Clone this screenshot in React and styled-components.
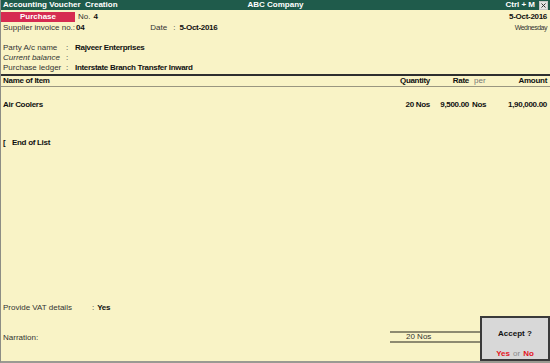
import styled, { createGlobalStyle } from 'styled-components';

const GlobalStyle = createGlobalStyle`
  html, body {
    margin: 0;
    padding: 0;
  }
  body {
    background: #f9f3c6;
    font-family: "Liberation Sans", Arial, sans-serif;
  }
`;

const Page = styled.div`
  position: relative;
  width: 550px;
  height: 363px;
  box-sizing: border-box;
  display: flex;
  flex-direction: column;
  background: #f9f3c6;
  border-left: 1px solid #8d8d85;
  border-bottom: 2px solid #9a9a92;
  overflow: hidden;
  font-size: 8px;
  color: #2a2a2a;
`;

const TitleBar = styled.div`
  height: 10px;
  display: grid;
  grid-template-columns: 1fr auto 1fr;
  align-items: center;
  padding: 0 2px 0 2px;
  background: #1f5b4b;
  color: #fff;
  font-weight: bold;
  line-height: 10px;
`;

const TitleRight = styled.div`
  display: flex;
  justify-content: flex-end;
  align-items: center;
  gap: 4px;
`;

const CloseBox = styled.span`
  width: 7px;
  height: 7px;
  display: flex;
  align-items: center;
  justify-content: center;
  background: #e4e4e4;
  border: 1px solid #c8c8c8;
`;

const Top = styled.div`
  display: flex;
  padding-right: 3px;
`;

const LeftCol = styled.div`
  flex: 1;
  display: flex;
  flex-direction: column;
`;

const RightCol = styled.div`
  display: flex;
  flex-direction: column;
  align-items: flex-end;
`;

const Row = styled.div`
  display: flex;
  align-items: center;
  height: 10px;
  line-height: 10px;
  margin-top: ${p => p.$mt || 0}px;
  padding-left: ${p => (p.$flush ? 0 : 2)}px;
  white-space: nowrap;
`;

const Badge = styled.div`
  width: 74px;
  height: 10px;
  background: #d62b51;
  color: #fff;
  font-weight: bold;
  text-align: center;
  line-height: 10px;
`;

const Label = styled.span`
  width: ${p => p.$w || 'auto'};
  margin-left: ${p => p.$ml || 0}px;
  font-style: ${p => (p.$italic ? 'italic' : 'normal')};
  color: #333;
`;

const Colon = styled.span`
  width: 9px;
  color: #333;
`;

const Value = styled.span`
  font-weight: bold;
  color: #111;
  letter-spacing: -0.3px;
  margin-left: ${p => p.$ml || 0}px;
`;

const DateBig = styled.span`
  font-weight: bold;
  color: #111;
  letter-spacing: -0.3px;
`;

const DaySmall = styled.span`
  font-size: 7px;
  letter-spacing: -0.5px;
  color: #333;
`;

const Divider = styled.div`
  height: ${p => p.$h}px;
  margin-top: ${p => p.$mt || 0}px;
  background: ${p => p.$c};
`;

const Grid = styled.div`
  display: grid;
  grid-template-columns: 1fr 60px 39px 35px 43px;
  align-items: center;
  height: 10px;
  line-height: 10px;
  padding: 0 3px 0 2px;
  margin-top: ${p => p.$mt || 0}px;
  font-weight: bold;
  color: #111;
  letter-spacing: -0.3px;
  white-space: nowrap;
`;

const Cell = styled.span`
  text-align: ${p => (p.$left ? 'left' : 'right')};
  padding-left: ${p => p.$pl || 0}px;
`;

const Per = styled(Cell)`
  font-weight: normal;
  color: #777;
  letter-spacing: 0;
`;

const Bracket = styled.span`
  width: 9px;
`;

const Bottom = styled.div`
  margin-top: auto;
  display: flex;
  flex-direction: column;
  padding-bottom: 18px;
`;

const NarrationRow = styled.div`
  display: flex;
  align-items: center;
  height: 12px;
  margin-top: 18px;
  padding-left: 2px;
`;

const TotalBox = styled.div`
  margin-left: auto;
  margin-right: 70px;
  width: 90px;
  height: 12px;
  box-sizing: border-box;
  border-top: 2px solid #8e8a70;
  border-bottom: 2px solid #8e8a70;
  padding-left: 16px;
  line-height: 8px;
  color: #333;
`;

const AcceptBox = styled.div`
  position: absolute;
  right: 0;
  bottom: 0;
  width: 70px;
  height: 45px;
  box-sizing: border-box;
  display: flex;
  flex-direction: column;
  align-items: center;
  border: 2px solid #3a3a3a;
  background: #d8d8d8;
  line-height: 10px;
`;

const AcceptTitle = styled.div`
  margin-top: 11px;
  font-weight: bold;
  color: #111;
`;

const AcceptChoice = styled.div`
  margin-top: auto;
  display: flex;
  gap: 3px;
`;

const Choice = styled.span`
  color: ${p => (p.$muted ? '#8a8a8a' : '#e3141c')};
  font-weight: ${p => (p.$muted ? 'normal' : 'bold')};
`;

export default function App() {
  return (
    <>
      <GlobalStyle />
      <Page>
        <TitleBar>
          <span>Accounting Voucher&nbsp;&nbsp;Creation</span>
          <span>ABC Company</span>
          <TitleRight>
            <span>Ctrl + M</span>
            <CloseBox>
              <svg width="5" height="5" viewBox="0 0 5 5">
                <path d="M0.5 0.5 L4.5 4.5 M4.5 0.5 L0.5 4.5" stroke="#333" strokeWidth="1" />
              </svg>
            </CloseBox>
          </TitleRight>
        </TitleBar>

        <Top>
          <LeftCol>
            <Row $mt={2} $flush>
              <Badge>Purchase</Badge>
              <Label $ml={3}>No.</Label>
              <Value $ml={3}>4</Value>
            </Row>
            <Row $mt={1}>
              <Label $w="73px">Supplier invoice no.:</Label>
              <Value>04</Value>
              <Label $ml={66}>Date</Label>
              <Label $ml={6}>:</Label>
              <Value $ml={4}>5-Oct-2016</Value>
            </Row>
            <Row $mt={10}>
              <Label $w="63px">Party A/c name</Label>
              <Colon>:</Colon>
              <Value>Rajveer Enterprises</Value>
            </Row>
            <Row>
              <Label $w="63px" $italic>Current balance</Label>
              <Colon>:</Colon>
            </Row>
            <Row>
              <Label $w="63px">Purchase ledger</Label>
              <Colon>:</Colon>
              <Value>Interstate Branch Transfer Inward</Value>
            </Row>
          </LeftCol>
          <RightCol>
            <Row $mt={2}>
              <DateBig>5-Oct-2016</DateBig>
            </Row>
            <Row $mt={1}>
              <DaySmall>Wednesday</DaySmall>
            </Row>
          </RightCol>
        </Top>

        <Divider $h={2} $mt={1} $c="#2e2e2e" />
        <Grid>
          <Cell $left>Name of Item</Cell>
          <Cell>Quantity</Cell>
          <Cell>Rate</Cell>
          <Per $left $pl={5}>per</Per>
          <Cell>Amount</Cell>
        </Grid>
        <Divider $h={1} $c="#9a9680" />

        <Grid $mt={13}>
          <Cell $left>Air Coolers</Cell>
          <Cell>20 Nos</Cell>
          <Cell>9,500.00</Cell>
          <Cell $left $pl={3}>Nos</Cell>
          <Cell>1,90,000.00</Cell>
        </Grid>

        <Row $mt={28}>
          <Bracket>
            <Value>[</Value>
          </Bracket>
          <Value>End of List</Value>
        </Row>

        <Bottom>
          <Row>
            <Label $w="89px">Provide VAT details</Label>
            <Label>:</Label>
            <Value $ml={3}>Yes</Value>
          </Row>
          <NarrationRow>
            <Label>Narration:</Label>
            <TotalBox>20 Nos</TotalBox>
          </NarrationRow>
        </Bottom>

        <AcceptBox>
          <AcceptTitle>Accept ?</AcceptTitle>
          <AcceptChoice>
            <Choice>Yes</Choice>
            <Choice $muted>or</Choice>
            <Choice>No</Choice>
          </AcceptChoice>
        </AcceptBox>
      </Page>
    </>
  );
}
